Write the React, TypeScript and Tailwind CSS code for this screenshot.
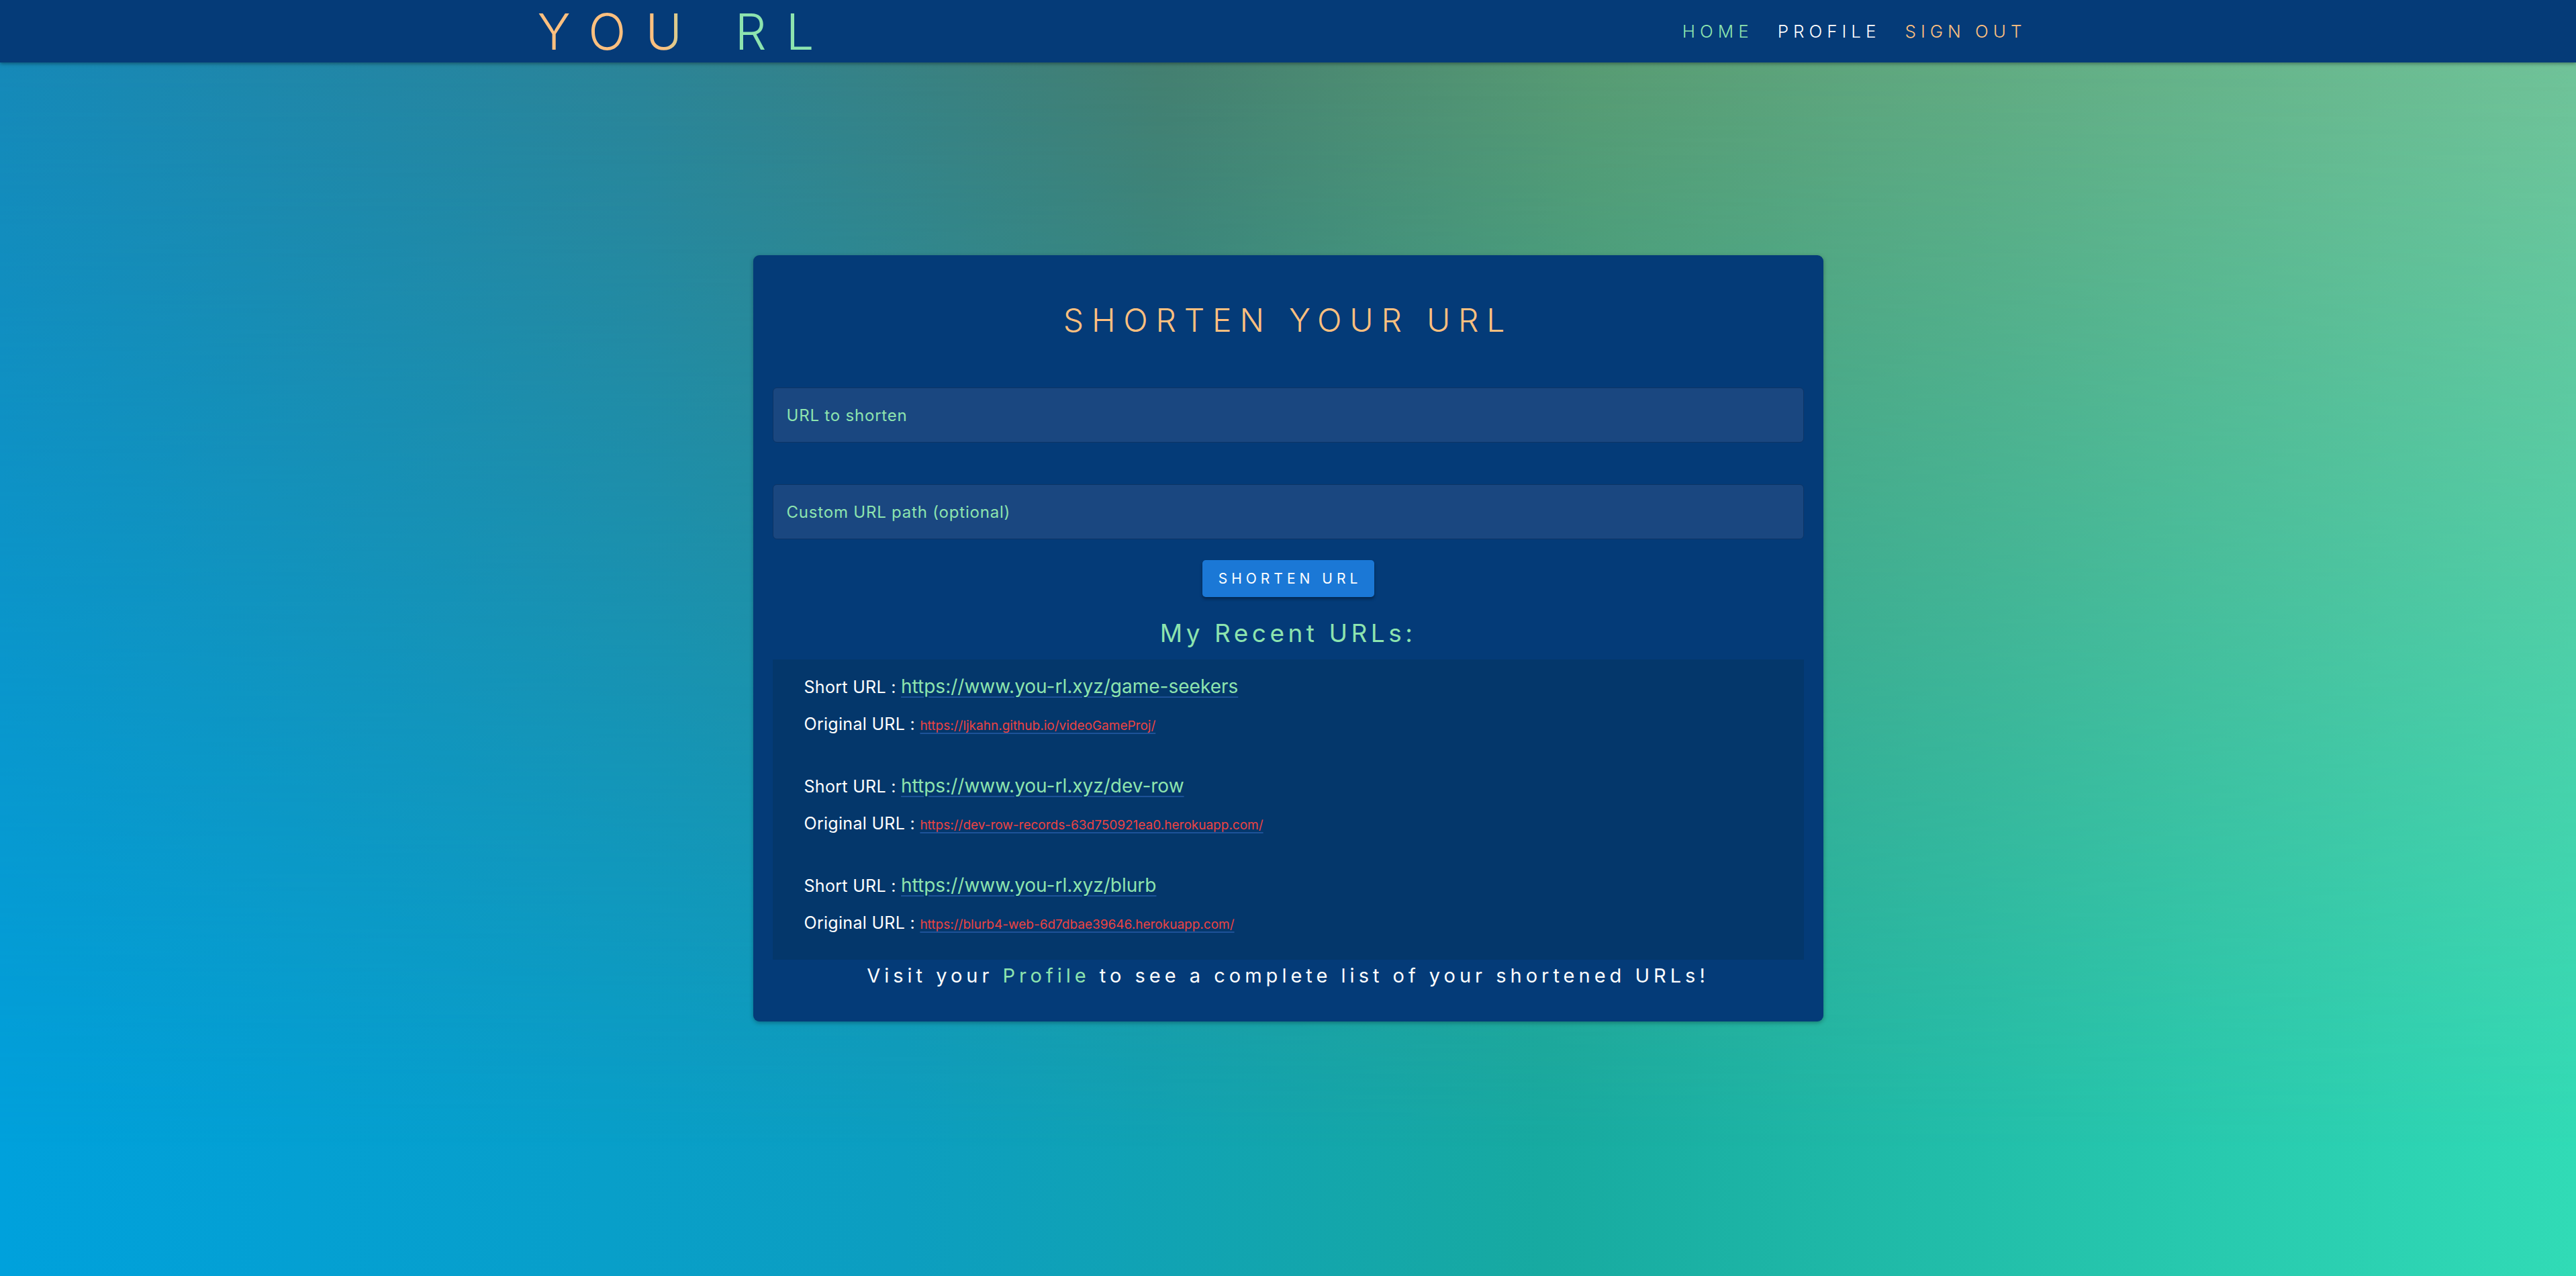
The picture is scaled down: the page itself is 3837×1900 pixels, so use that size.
import React from "react";

const recentLinks = [
  {
    short: "https://www.you-rl.xyz/game-seekers",
    original: "https://ljkahn.github.io/videoGameProj/",
  },
  {
    short: "https://www.you-rl.xyz/dev-row",
    original: "https://dev-row-records-63d750921ea0.herokuapp.com/",
  },
  {
    short: "https://www.you-rl.xyz/blurb",
    original: "https://blurb4-web-6d7dbae39646.herokuapp.com/",
  },
];

export default function App() {
  return (
    <div className="relative min-h-screen overflow-hidden bg-[linear-gradient(to_right,#00a1dc_0%,#0c9ec0_35%,#17aaa1_60%,#31dbb6_100%)] font-['Inter','Liberation_Sans',sans-serif] before:pointer-events-none before:absolute before:inset-0 before:bg-[linear-gradient(to_right,#1589b8_0%,#2b8497_25%,#447f70_45%,#589b73_62%,#70c298_100%)] before:[mask-image:linear-gradient(to_bottom,#000_5%,transparent_90%)]">
      <div className="relative">
        <header className="h-[93px] bg-[#053b78] shadow-[0_2px_5px_rgba(0,0,0,0.35)]">
          <div className="mx-auto flex h-full w-[2236px] items-center justify-between">
            <a
              href="#"
              className="bg-[linear-gradient(to_right,#ffc07f_0%,#ffc07f_42%,#8de4af_58%,#8de4af_100%)] bg-clip-text text-[74px] font-light leading-none tracking-[29px] text-transparent"
            >
              YOU RL
            </a>
            <nav className="flex items-center gap-[36px] pr-[18px] text-[26px] font-light tracking-[7px]">
              <a href="#" className="text-[#8de4af]">
                HOME
              </a>
              <a href="#" className="text-white">
                PROFILE
              </a>
              <a href="#" className="text-[#ffc07f]">
                SIGN OUT
              </a>
            </nav>
          </div>
        </header>

        <main className="flex justify-center pt-[287px] pb-10">
          <section className="w-[1594px] rounded-[9px] bg-[#043b78] px-[29px] pt-[68px] pb-[51px] shadow-[0_2px_6px_rgba(0,0,0,0.3)]">
            <h1 className="text-center text-[48px] font-light leading-[58px] tracking-[11.8px] text-[#ffc07f]">
              SHORTEN YOUR URL
            </h1>

            <form className="mt-[71px] flex flex-col">
              <input
                placeholder="URL to shorten"
                className="h-[82px] w-full rounded-[6px] border border-[#0c3465] bg-[#1a4780] px-[20px] text-[24px] tracking-[0.8px] text-[#8de4af] outline-none placeholder:text-[#8de4af]"
              />
              <input
                placeholder="Custom URL path (optional)"
                className="mt-[62px] h-[82px] w-full rounded-[6px] border border-[#0c3465] bg-[#1a4780] px-[20px] text-[24px] tracking-[0.8px] text-[#8de4af] outline-none placeholder:text-[#8de4af]"
              />
              <button
                type="button"
                className="mx-auto mt-[31px] flex h-[55px] w-[256px] items-center justify-center rounded-[5px] bg-[#1b78d6] pl-[6px] text-[21px] tracking-[6px] text-white shadow-[0_3px_4px_rgba(0,0,0,0.35)]"
              >
                SHORTEN URL
              </button>
            </form>

            <h2 className="mt-[32px] text-center text-[37px] leading-[44px] tracking-[5.5px] text-[#8de4af]">
              My Recent URLs:
            </h2>

            <ul className="mt-[17px] bg-[#04376b] pt-[22px] pb-[40px] pl-[47px]">
              {recentLinks.map((link, i) => (
                <li key={link.short} className={i === 0 ? "" : "mt-[59px]"}>
                  <p className="text-[25px] leading-[36px] tracking-[0.3px] text-white">
                    Short URL :{" "}
                    <a
                      href="#"
                      className="text-[28px] tracking-normal text-[#8de4af] underline decoration-[#1d5298] decoration-2 underline-offset-[5px]"
                    >
                      {link.short}
                    </a>
                  </p>
                  <p className="mt-[25px] text-[25px] leading-[24px] tracking-[0.3px] text-white">
                    Original URL :{" "}
                    <a
                      href="#"
                      className="text-[19px] tracking-normal text-[#ec4343] underline decoration-[#1d5298] decoration-2 underline-offset-[4px]"
                    >
                      {link.original}
                    </a>
                  </p>
                </li>
              ))}
            </ul>

            <p className="mt-[6px] text-center text-[29px] leading-[35px] tracking-[6px] text-white">
              Visit your{" "}
              <a href="#" className="text-[#8de4af]">
                Profile
              </a>{" "}
              to see a complete list of your shortened URLs!
            </p>
          </section>
        </main>
      </div>
    </div>
  );
}
